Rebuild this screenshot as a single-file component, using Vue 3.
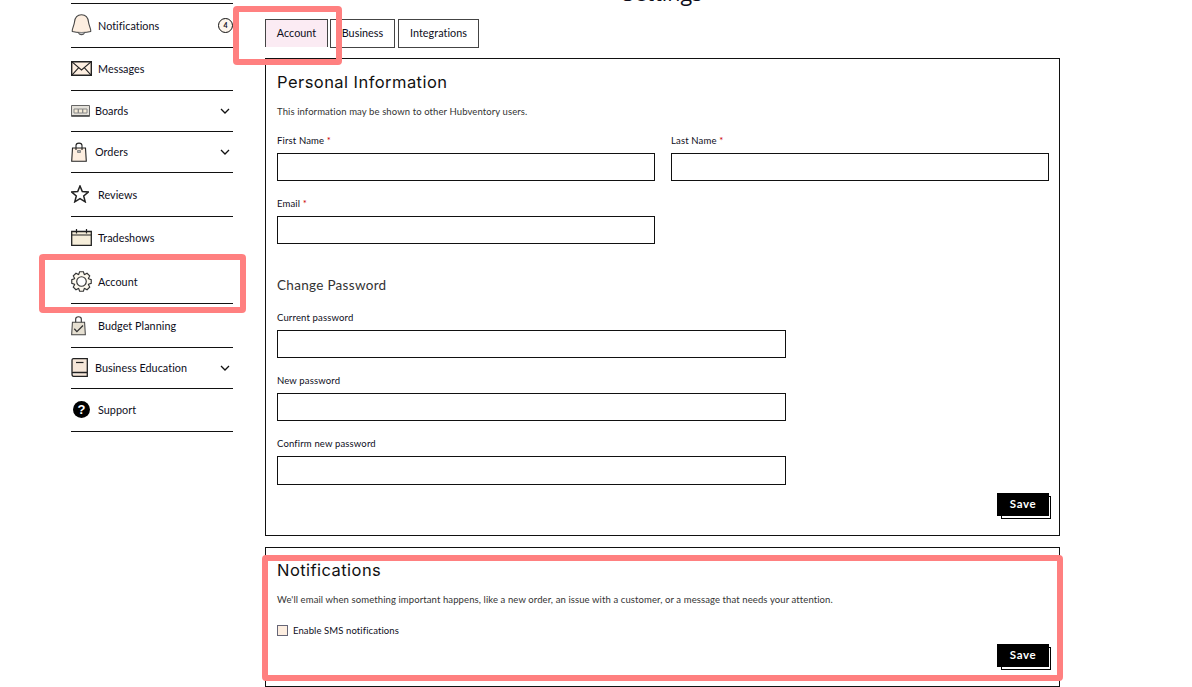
<script setup>
const peach = '#fdeee0'

function gearPath() {
  const teeth = 8
  const cx = 11
  const cy = 11
  let d = ''
  for (let i = 0; i < teeth; i++) {
    const a = (i / teeth) * Math.PI * 2
    const step = Math.PI / teeth
    const pts = [
      [a - step * 0.95, 7.9],
      [a - step * 0.5, 10.4],
      [a + step * 0.5, 10.4],
      [a + step * 0.95, 7.9]
    ].map(([t, r]) => `${(cx + r * Math.cos(t)).toFixed(1)} ${(cy + r * Math.sin(t)).toFixed(1)}`)
    d += (i === 0 ? 'M' : 'L') + pts.join('L')
  }
  return d + 'Z'
}

const items = [
  { label: 'Notifications', h: 'h44', w: 'wide', badge: 4, vb: '0 0 21 22', size: [21, 22], shapes: [
    { d: 'M1.300 17.500C.5 15.500 3 12.500 3.500 8C4 3 6.800 .7 10.500 .7C14.200 .7 17 3 17.500 8C18 12.500 20.500 15.500 19.700 17.500C15 19 6 19 1.300 17.500Z', f: peach, s: '#444', sw: 1.100 },
    { d: 'M7.500 18.500C8 21.300 13 21.300 13.500 18.500', f: '#ccc', s: '#555', sw: 1.100 } ] },
  { label: 'Messages', h: 'h43', w: 'wide', vb: '0 0 21 15', size: [21, 15], shapes: [
    { d: 'M.7.7H20.300V14.300H.7Z', f: peach, sw: 1.400 },
    { d: 'M.7.7L10.500 9L20.300.7M.7 14.300L7.500 6.800M20.300 14.300L13.500 6.800', f: 'none', sw: 1.100 } ] },
  { label: 'Boards', h: 'h41', w: 'narrow', chevron: true, vb: '0 0 19 12', size: [19, 12], shapes: [
    { d: 'M.5.5H18.500V11.500H.5Z', f: '#e4e1da', s: '#666' },
    { d: 'M3 4H7.300V8H3ZM7.300 4H11.700V8H7.300ZM11.700 4H16V8H11.700Z', f: '#f5ecd8', s: '#888' },
    { d: 'M.5 10.500H18.500', f: 'none', s: '#555' } ] },
  { label: 'Orders', h: 'h41', w: 'narrow', chevron: true, vb: '0 0 16 20', size: [16, 20], shapes: [
    { d: 'M1.500 6H14.500L15.300 19.300H.7Z', f: peach, sw: 1.100 },
    { d: 'M5 8V3.500C5 .3 11 .3 11 3.500V8', f: 'none', sw: 1.100 },
    { d: 'M6.500 8.500H9.500V10.500H6.500Z', f: '#aaa', s: '#888' } ] },
  { label: 'Reviews', h: 'h44', w: 'wide', vb: '0 0 18 18', size: [18, 18], shapes: [
    { d: 'M9 1L11.300 6.600L17.300 7L12.700 10.900L14.200 16.800L9 13.600L3.800 16.800L5.300 10.900L.7 7L6.700 6.600Z', f: '#fff', sw: 1.500 } ] },
  { label: 'Tradeshows', h: 'h43', w: 'wide', vb: '0 0 21 17', size: [21, 17], shapes: [
    { d: 'M.7 2.500H20.300V16.300H.7Z', f: '#f6eeda', sw: 1.300 },
    { d: 'M.7 6H20.300M5.500 0V4.500M15.500 0V4.500', f: 'none', sw: 1.200 } ] },
  { label: 'Account', h: 'h44', w: 'wide', vb: '0 0 22 22', size: [21, 21], shapes: [
    { d: gearPath(), f: '#fdf9ee', s: '#333', sw: 1.200 },
    { d: 'M6 11A5 5 0 1 0 16 11A5 5 0 1 0 6 11Z', f: '#fff', s: '#333', sw: 1.200 } ] },
  { label: 'Budget Planning', h: 'h44', w: 'wide', vb: '0 0 16 21', size: [15, 21], shapes: [
    { d: 'M1.500 7H14.500L15.300 20.300H.7Z', f: '#e6e0d2', s: '#444', sw: 1.100 },
    { d: 'M5 7V3.500C5 .3 11 .3 11 3.500V7', f: 'none', s: '#333', sw: 1.200 },
    { d: 'M3.500 14L6.300 17L12.800 10.500', f: 'none', s: '#333', sw: 1.400 } ] },
  { label: 'Business Education', h: 'h41', w: 'narrow', chevron: true, vb: '0 0 17 19', size: [17, 19], shapes: [
    { d: 'M1 16V2.500C1 1.500 1.500 .7 2.500 .7H16.300V14.500H2.500C1.500 14.500 1 15 1 16C1 17.300 1.500 18.300 2.500 18.300H16.300V14.500', f: '#f6e6d8', sw: 1.300 },
    { d: 'M5 4.500H12.500', f: 'none', sw: 1.200 } ] },
  { label: 'Support', h: 'h43', w: 'wide', help: true }
]
</script>

<template>
  <div class="page">
    <nav class="side">
      <div v-for="item in items" :key="item.label" class="row" :class="item.h">
        <span class="ico" :class="item.w">
          <span v-if="item.help" class="help">?</span>
          <svg v-else :width="item.size[0]" :height="item.size[1]" :viewBox="item.vb">
            <path
              v-for="(s, i) in item.shapes"
              :key="i"
              :d="s.d"
              :fill="s.f"
              :stroke="s.s || '#222'"
              :stroke-width="s.sw || 1"
            />
          </svg>
        </span>
        <span class="name">{{ item.label }}</span>
        <span v-if="item.badge" class="badge">{{ item.badge }}</span>
        <svg v-if="item.chevron" class="chev" width="10" height="6" viewBox="0 0 10 6">
          <path d="M1 1L5 5L9 1" fill="none" stroke="#111" stroke-width="1.300" />
        </svg>
      </div>
    </nav>

    <main class="main">
      <h1 class="title">Settings</h1>
      <div class="tabs">
        <span class="tab active">Account</span>
        <span class="tab business">Business</span>
        <span class="tab integ">Integrations</span>
      </div>

      <section class="panel first">
        <h2>Personal Information</h2>
        <p class="desc">This information may be shown to other Hubventory users.</p>
        <div class="cols">
          <div class="field">
            <label>First Name <i>*</i></label>
            <div class="input"></div>
          </div>
          <div class="field">
            <label>Last Name <i>*</i></label>
            <div class="input"></div>
          </div>
          <div class="field">
            <label>Email <i>*</i></label>
            <div class="input"></div>
          </div>
        </div>
        <h3>Change Password</h3>
        <div class="field pw">
          <label>Current password</label>
          <div class="input"></div>
        </div>
        <div class="field pw">
          <label>New password</label>
          <div class="input"></div>
        </div>
        <div class="field pw">
          <label>Confirm new password</label>
          <div class="input tall"></div>
        </div>
        <div class="actions"><span class="save">Save</span></div>
      </section>

      <section class="panel second">
        <h2>Notifications</h2>
        <p class="desc">We'll email when something important happens, like a new order, an issue with a customer, or a message that needs your attention.</p>
        <div class="check"><span class="box"></span><span>Enable SMS notifications</span></div>
        <div class="actions"><span class="save">Save</span></div>
      </section>
    </main>

    <div class="mark mark-side"></div>
    <div class="mark mark-tab"></div>
    <div class="mark mark-notif"></div>
  </div>
</template>

<style>
html, body { margin: 0; overflow: hidden; background: #fff; }
</style>

<style scoped>
.page {
  position: relative;
  display: flex;
  align-items: flex-start;
  width: 1192px;
  height: 687px;
  overflow: hidden;
  font-family: Lato, "Liberation Sans", sans-serif;
  color: #0d0d1a;
  background: #fff;
}
.side {
  width: 162px;
  margin: 3px 0 0 71px;
  border-top: 1px solid #111;
  flex: none;
}
.row {
  display: flex;
  align-items: center;
  box-sizing: border-box;
  padding-bottom: 1px;
  border-bottom: 1px solid #111;
  font-size: 10.800px;
  letter-spacing: .05px;
}
.h41 { height: 41px; }
.h43 { height: 43px; }
.h44 { height: 44px; }
.ico { display: flex; align-items: center; flex: none; }
.wide { width: 27px; }
.narrow { width: 24px; }
.name { flex: 1; }
.help {
  width: 17px;
  height: 17px;
  margin-left: 2px;
  border-radius: 50%;
  background: #000;
  color: #fff;
  font: 700 13px/17px "Liberation Sans", sans-serif;
  text-align: center;
}
.badge {
  width: 13px;
  height: 13px;
  border: 1px solid #111;
  border-radius: 50%;
  background: #fdf5ec;
  font-size: 7px;
  font-weight: 700;
  line-height: 13px;
  text-align: center;
}
.chev { margin-right: 3px; }
.main { width: 795px; margin-left: 32px; flex: none; }
.title {
  margin: -17px 0 0;
  height: 36px;
  font-size: 21.500px;
  font-weight: 400;
  line-height: 20px;
  text-align: center;
  font-family: "Open Sans", sans-serif;
}
.tabs { display: flex; height: 39px; }
.tab {
  box-sizing: border-box;
  height: 29px;
  border: 1px solid #444;
  font-size: 10.800px;
  letter-spacing: .05px;
  line-height: 26px;
  text-align: center;
}
.active { width: 63px; height: 28px; border-bottom: 0; background: #fbebf3; }
.business { width: 65px; margin-left: 2px; }
.integ { width: 81px; margin-left: 3px; }
.panel {
  box-sizing: border-box;
  border: 1px solid #111;
  padding: 11px 10px 0 11px;
}
.first { height: 478px; }
.second { height: 140px; margin-top: 11px; padding-top: 10px; }
h2 {
  margin: 0;
  font: 400 16.500px/24px Inter, sans-serif;
  letter-spacing: .45px;
  color: #111;
}
.desc {
  margin: 11px 0 15px;
  font-size: 9.500px;
  letter-spacing: .1px;
  line-height: 14px;
  color: #333;
}
.second .desc { margin-bottom: 17px; }
.cols {
  display: grid;
  grid-template-columns: 378px 378px;
  column-gap: 16px;
  row-gap: 16px;
}
label {
  display: block;
  height: 14px;
  margin-bottom: 5px;
  font-size: 9.500px;
  letter-spacing: .15px;
  line-height: 14px;
}
label i { color: #c00; font-style: normal; }
.input {
  box-sizing: border-box;
  height: 28px;
  border: 1px solid #111;
}
.tall { height: 29px; }
h3 {
  margin: 31px 0 16px;
  font: 400 13.500px/20px Lato, sans-serif;
  letter-spacing: .3px;
  color: #333;
}
.pw { width: 509px; margin-bottom: 16px; }
.actions { display: flex; justify-content: flex-end; }
.first .actions { margin-top: -8px; }
.save {
  position: relative;
  z-index: 0;
  width: 52px;
  height: 23px;
  color: #fff;
  font-size: 11.500px;
  font-weight: 700;
  letter-spacing: .6px;
  line-height: 22px;
  text-align: center;
}
.save::before {
  content: "";
  position: absolute;
  z-index: -1;
  inset: 0;
  background: #000;
}
.save::after {
  content: "";
  position: absolute;
  z-index: -2;
  left: 4px;
  top: 3px;
  width: 48px;
  height: 21px;
  border: 1px solid #000;
  background: #fff;
}
.check {
  display: flex;
  align-items: center;
  gap: 5px;
  height: 12px;
  font-size: 9.500px;
  letter-spacing: .1px;
}
.box {
  box-sizing: border-box;
  width: 11px;
  height: 11px;
  border: 1px solid #667;
  background: #fdeee0;
}
.second .actions { margin-top: 8px; }
.mark {
  position: absolute;
  box-sizing: border-box;
  border: 6px solid #ff8080;
  border-radius: 4px;
}
.mark-side { left: 39px; top: 254px; width: 207px; height: 59px; }
.mark-tab { left: 233px; top: 6px; width: 109px; height: 59px; }
.mark-notif { left: 262px; top: 555px; width: 801px; height: 126px; }
</style>
